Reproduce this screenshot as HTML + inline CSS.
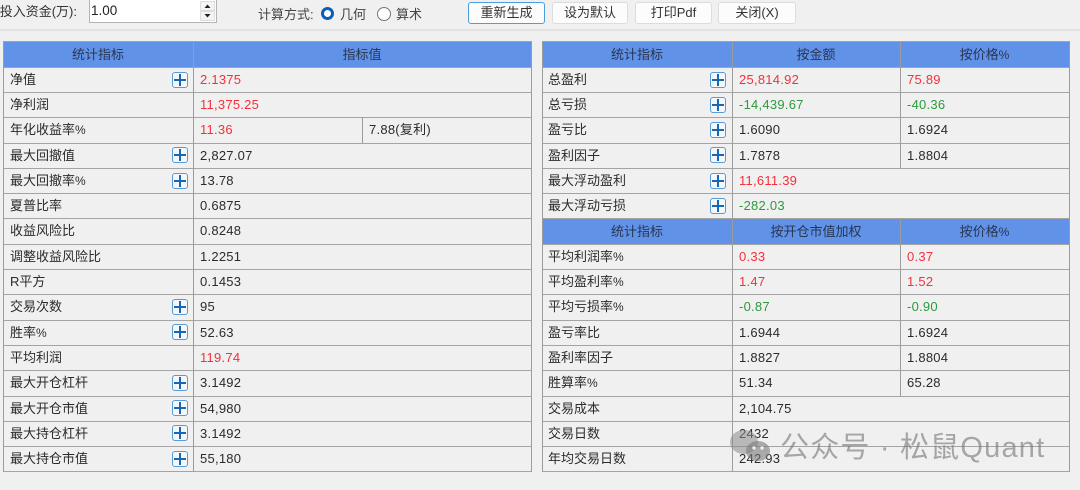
<!DOCTYPE html>
<html lang="zh">
<head>
<meta charset="utf-8">
<title>统计指标</title>
<style>
html,body{margin:0;padding:0;width:1080px;height:490px;overflow:hidden;background:#f0f0f0}
body{position:relative;font:13px/25px "Liberation Sans","Noto Sans CJK SC",sans-serif;color:#2b2b2b;filter:blur(.3px)}
div,span,i{position:absolute;display:block;font-style:normal;white-space:nowrap}
em{font-style:normal;font-size:12px}
.hd{background:#6092e8;height:26px}
.h{height:1px;background:#a4a4a4}
.v{width:1px;background:#9c9c9c}
.c{text-align:center;line-height:25px;margin-top:1px;color:#2a3550}
.p{width:14px;height:14px;margin-top:1px;border:1.5px solid #5b9bd5;border-radius:3px;background:#f4f8fc}
.p:before{content:"";position:absolute;left:1px;right:1px;top:6px;height:2px;background:#1767b5}
.p:after{content:"";position:absolute;top:1px;bottom:1px;left:6px;width:2px;background:#1767b5}
.red{color:#f5303c}.grn{color:#2d9a3c}
.n{letter-spacing:.25px}
.btn{top:2px;height:20px;width:75px;background:#fcfcfc;border:1px solid #dcdcdc;border-radius:3px;text-align:center;line-height:20px;color:#333}
</style>
</head>
<body>
<!-- toolbar -->
<span style="left:-3px;top:-1px;width:80px;overflow:hidden;direction:rtl;text-align:right;color:#333"><bdi>投入资金(万):</bdi></span>
<div style="left:89px;top:0;width:126px;height:22px;background:#fff;border:1px solid #b4b4b4;border-top:0"></div>
<span style="left:91px;top:-2px;font-size:13.5px;color:#222">1.00</span>
<div style="left:200px;top:1px;width:15px;height:10px;background:#f4f4f4;border:1px solid #ddd;box-sizing:border-box"></div>
<div style="left:200px;top:11px;width:15px;height:10px;background:#f4f4f4;border:1px solid #ddd;box-sizing:border-box"></div>
<svg style="position:absolute;left:200px;top:1px" width="15" height="20"><path d="M7.5 3.5L4.5 7h6zM7.5 16.5L4.5 13h6z" fill="#222"/></svg>
<span style="left:258px;top:2px;color:#444">计算方式:</span>
<div style="left:321px;top:7px;width:7px;height:7px;border:3.5px solid #0a5fb4;border-radius:50%;background:#fff"></div>
<span style="left:340px;top:2px;color:#444">几何</span>
<div style="left:377px;top:7px;width:12px;height:12px;border:1px solid #777;border-radius:50%;background:#fff"></div>
<span style="left:396px;top:2px;color:#444">算术</span>
<div class="btn" style="left:468px;width:75px;border-color:#4e9ddb">重新生成</div>
<div class="btn" style="left:552px;width:74px">设为默认</div>
<div class="btn" style="left:635px">打印Pdf</div>
<div class="btn" style="left:718px;width:76px">关闭(X)</div>
<div style="left:0;top:29px;width:1080px;height:2px;background:#e2e2e2"></div>

<!-- header fills -->
<div class="hd" style="left:3px;top:41px;width:528px"></div>
<div class="hd" style="left:542px;top:41px;width:527px"></div>
<div class="hd" style="left:542px;top:218px;width:527px"></div>

<!-- left table lines -->
<div class="h" style="left:3px;width:529px;top:41px"></div>
<div class="h" style="left:3px;width:529px;top:67px"></div>
<div class="h" style="left:3px;width:529px;top:92px"></div>
<div class="h" style="left:3px;width:529px;top:117px"></div>
<div class="h" style="left:3px;width:529px;top:143px"></div>
<div class="h" style="left:3px;width:529px;top:168px"></div>
<div class="h" style="left:3px;width:529px;top:193px"></div>
<div class="h" style="left:3px;width:529px;top:218px"></div>
<div class="h" style="left:3px;width:529px;top:244px"></div>
<div class="h" style="left:3px;width:529px;top:269px"></div>
<div class="h" style="left:3px;width:529px;top:294px"></div>
<div class="h" style="left:3px;width:529px;top:320px"></div>
<div class="h" style="left:3px;width:529px;top:345px"></div>
<div class="h" style="left:3px;width:529px;top:370px"></div>
<div class="h" style="left:3px;width:529px;top:396px"></div>
<div class="h" style="left:3px;width:529px;top:421px"></div>
<div class="h" style="left:3px;width:529px;top:446px"></div>
<div class="h" style="left:3px;width:529px;top:471px"></div>
<div class="v" style="left:3px;top:41px;height:431px"></div>
<div class="v" style="left:193px;top:41px;height:431px"></div>
<div class="v" style="left:531px;top:41px;height:431px"></div>
<div class="v" style="left:362px;top:117px;height:26px"></div>

<!-- right table lines -->
<div class="h" style="left:542px;width:528px;top:41px"></div>
<div class="h" style="left:542px;width:528px;top:67px"></div>
<div class="h" style="left:542px;width:528px;top:92px"></div>
<div class="h" style="left:542px;width:528px;top:117px"></div>
<div class="h" style="left:542px;width:528px;top:143px"></div>
<div class="h" style="left:542px;width:528px;top:168px"></div>
<div class="h" style="left:542px;width:528px;top:193px"></div>
<div class="h" style="left:542px;width:528px;top:218px"></div>
<div class="h" style="left:542px;width:528px;top:244px"></div>
<div class="h" style="left:542px;width:528px;top:269px"></div>
<div class="h" style="left:542px;width:528px;top:294px"></div>
<div class="h" style="left:542px;width:528px;top:320px"></div>
<div class="h" style="left:542px;width:528px;top:345px"></div>
<div class="h" style="left:542px;width:528px;top:370px"></div>
<div class="h" style="left:542px;width:528px;top:396px"></div>
<div class="h" style="left:542px;width:528px;top:421px"></div>
<div class="h" style="left:542px;width:528px;top:446px"></div>
<div class="h" style="left:542px;width:528px;top:471px"></div>
<div class="v" style="left:542px;top:41px;height:431px"></div>
<div class="v" style="left:732px;top:41px;height:431px"></div>
<div class="v" style="left:1069px;top:41px;height:431px"></div>
<div class="v" style="left:900px;top:41px;height:127px"></div>
<div class="v" style="left:900px;top:218px;height:178px"></div>

<!-- left headers -->
<span class="c" style="left:3px;width:190px;top:41px">统计指标</span>
<span class="c" style="left:193px;width:338px;top:41px">指标值</span>

<!-- left rows -->
<span style="left:10px;top:67px">净值</span><i class="p" style="left:172px;top:71px"></i><span class="n red" style="left:200px;top:67px">2.1375</span>
<span style="left:10px;top:92px">净利润</span><span class="n red" style="left:200px;top:92px">11,375.25</span>
<span style="left:10px;top:117px">年化收益率<em>%</em></span><span class="n red" style="left:200px;top:117px">11.36</span><span class="n" style="left:369px;top:117px">7.88(复利)</span>
<span style="left:10px;top:143px">最大回撤值</span><i class="p" style="left:172px;top:146px"></i><span class="n" style="left:200px;top:143px">2,827.07</span>
<span style="left:10px;top:168px">最大回撤率<em>%</em></span><i class="p" style="left:172px;top:172px"></i><span class="n" style="left:200px;top:168px">13.78</span>
<span style="left:10px;top:193px">夏普比率</span><span class="n" style="left:200px;top:193px">0.6875</span>
<span style="left:10px;top:218px">收益风险比</span><span class="n" style="left:200px;top:218px">0.8248</span>
<span style="left:10px;top:244px">调整收益风险比</span><span class="n" style="left:200px;top:244px">1.2251</span>
<span style="left:10px;top:269px">R平方</span><span class="n" style="left:200px;top:269px">0.1453</span>
<span style="left:10px;top:294px">交易次数</span><i class="p" style="left:172px;top:298px"></i><span class="n" style="left:200px;top:294px">95</span>
<span style="left:10px;top:320px">胜率<em>%</em></span><i class="p" style="left:172px;top:323px"></i><span class="n" style="left:200px;top:320px">52.63</span>
<span style="left:10px;top:345px">平均利润</span><span class="n red" style="left:200px;top:345px">119.74</span>
<span style="left:10px;top:370px">最大开仓杠杆</span><i class="p" style="left:172px;top:374px"></i><span class="n" style="left:200px;top:370px">3.1492</span>
<span style="left:10px;top:396px">最大开仓市值</span><i class="p" style="left:172px;top:399px"></i><span class="n" style="left:200px;top:396px">54,980</span>
<span style="left:10px;top:421px">最大持仓杠杆</span><i class="p" style="left:172px;top:424px"></i><span class="n" style="left:200px;top:421px">3.1492</span>
<span style="left:10px;top:446px">最大持仓市值</span><i class="p" style="left:172px;top:450px"></i><span class="n" style="left:200px;top:446px">55,180</span>

<!-- right headers -->
<span class="c" style="left:542px;width:190px;top:41px">统计指标</span>
<span class="c" style="left:732px;width:168px;top:41px">按金额</span>
<span class="c" style="left:900px;width:169px;top:41px">按价格<em>%</em></span>
<span class="c" style="left:542px;width:190px;top:218px">统计指标</span>
<span class="c" style="left:732px;width:168px;top:218px">按开仓市值加权</span>
<span class="c" style="left:900px;width:169px;top:218px">按价格<em>%</em></span>

<!-- right rows -->
<span style="left:548px;top:67px">总盈利</span><i class="p" style="left:710px;top:71px"></i><span class="n red" style="left:739px;top:67px">25,814.92</span><span class="n red" style="left:907px;top:67px">75.89</span>
<span style="left:548px;top:92px">总亏损</span><i class="p" style="left:710px;top:96px"></i><span class="n grn" style="left:739px;top:92px">-14,439.67</span><span class="n grn" style="left:907px;top:92px">-40.36</span>
<span style="left:548px;top:117px">盈亏比</span><i class="p" style="left:710px;top:121px"></i><span class="n" style="left:739px;top:117px">1.6090</span><span class="n" style="left:907px;top:117px">1.6924</span>
<span style="left:548px;top:143px">盈利因子</span><i class="p" style="left:710px;top:146px"></i><span class="n" style="left:739px;top:143px">1.7878</span><span class="n" style="left:907px;top:143px">1.8804</span>
<span style="left:548px;top:168px">最大浮动盈利</span><i class="p" style="left:710px;top:172px"></i><span class="n red" style="left:739px;top:168px">11,611.39</span>
<span style="left:548px;top:193px">最大浮动亏损</span><i class="p" style="left:710px;top:197px"></i><span class="n grn" style="left:739px;top:193px">-282.03</span>
<span style="left:548px;top:244px">平均利润率<em>%</em></span><span class="n red" style="left:739px;top:244px">0.33</span><span class="n red" style="left:907px;top:244px">0.37</span>
<span style="left:548px;top:269px">平均盈利率<em>%</em></span><span class="n red" style="left:739px;top:269px">1.47</span><span class="n red" style="left:907px;top:269px">1.52</span>
<span style="left:548px;top:294px">平均亏损率<em>%</em></span><span class="n grn" style="left:739px;top:294px">-0.87</span><span class="n grn" style="left:907px;top:294px">-0.90</span>
<span style="left:548px;top:320px">盈亏率比</span><span class="n" style="left:739px;top:320px">1.6944</span><span class="n" style="left:907px;top:320px">1.6924</span>
<span style="left:548px;top:345px">盈利率因子</span><span class="n" style="left:739px;top:345px">1.8827</span><span class="n" style="left:907px;top:345px">1.8804</span>
<span style="left:548px;top:370px">胜算率<em>%</em></span><span class="n" style="left:739px;top:370px">51.34</span><span class="n" style="left:907px;top:370px">65.28</span>
<span style="left:548px;top:396px">交易成本</span><span class="n" style="left:739px;top:396px">2,104.75</span>
<span style="left:548px;top:421px">交易日数</span><span class="n" style="left:739px;top:421px">2432</span>
<span style="left:548px;top:446px">年均交易日数</span><span class="n" style="left:739px;top:446px">242.93</span>

<!-- watermark -->
<svg style="position:absolute;left:729px;top:429px" width="44" height="34"><ellipse cx="15" cy="13" rx="14" ry="12" fill="#8a8a8a" fill-opacity=".55"/><ellipse cx="29" cy="22" rx="12" ry="10" fill="#7a7a7a" fill-opacity=".6"/><circle cx="25" cy="19" r="1.7" fill="#eee"/><circle cx="33" cy="19" r="1.7" fill="#eee"/></svg>
<span style="left:780px;top:431px;font-size:29px;line-height:34px;letter-spacing:1.2px;color:rgba(110,110,110,.58)">公众号 · 松鼠Quant</span>
</body>
</html>
